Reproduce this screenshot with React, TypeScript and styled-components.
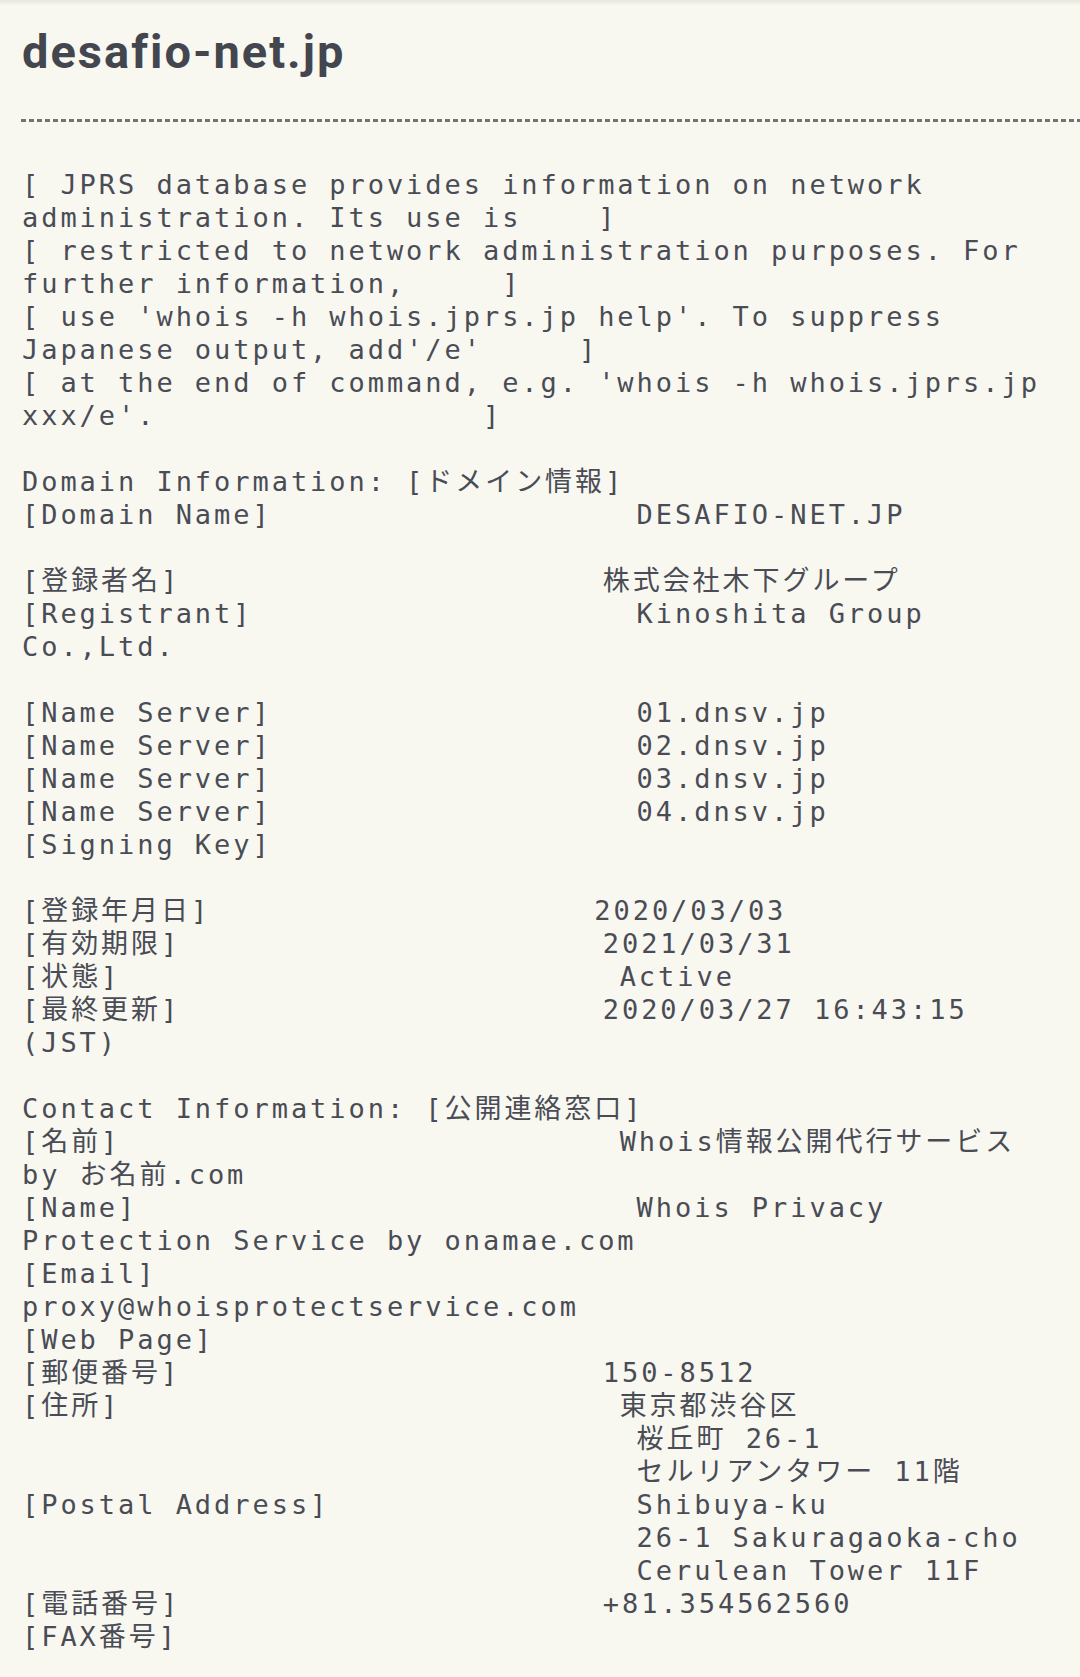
import React from "react";
import styled, { createGlobalStyle } from "styled-components";

const GlobalStyle = createGlobalStyle`
  html, body {
    margin: 0;
    padding: 0;
    background: #f8f8f1;
  }
  #root {
    min-height: 100vh;
  }
`;

const Page = styled.main`
  position: relative;
  min-height: 100vh;
  box-sizing: border-box;
  padding: 24px 21px 40px 22px;
  background: #f8f8f1;
  color: #484a53;
  overflow: hidden;

  &::before {
    content: "";
    position: absolute;
    left: 0;
    right: 0;
    top: 0;
    height: 6px;
    background: linear-gradient(to bottom, rgba(0, 0, 0, 0.07), rgba(0, 0, 0, 0));
    pointer-events: none;
  }
`;

const Title = styled.h1`
  margin: 0;
  font-family: Roboto, "Noto Sans", sans-serif;
  font-weight: 700;
  font-size: 47px;
  line-height: 56px;
  letter-spacing: 2px;
  color: #44464f;
`;

const Rule = styled.div`
  height: 3px;
  margin: 39px -21px 0 -1px;
  background: repeating-linear-gradient(
    to right,
    #737373 0px,
    #737373 5px,
    transparent 5px,
    transparent 8px
  );
`;

const WhoisText = styled.pre`
  margin: 46px 0 0;
  font-family: "DejaVu Sans Mono", "Noto Sans CJK JP", monospace;
  font-size: 27px;
  line-height: 33px;
  letter-spacing: 2.95px;
  white-space: pre-wrap;
  word-break: normal;
  overflow-wrap: normal;
  color: #4a4c55;
`;

const isWide = (c: string) => /[\u3000-\u9fff\uff00-\uffef]/.test(c);
const cols = (s: string) => Array.from(s).reduce((n, c) => n + (isWide(c) ? 2 : 1), 0);
const row = (label: string, value = "") =>
  value ? label + " ".repeat(Math.max(1, 32 - cols(label))) + value : label;
const cont = (value: string) => " ".repeat(32) + value;

const lines: string[] = [
  "[ JPRS database provides information on network administration. Its use is    ]",
  "[ restricted to network administration purposes. For further information,     ]",
  "[ use 'whois -h whois.jprs.jp help'. To suppress Japanese output, add'/e'     ]",
  "[ at the end of command, e.g. 'whois -h whois.jprs.jp xxx/e'.                 ]",
  "",
  "Domain Information: [ドメイン情報]",
  row("[Domain Name]", "DESAFIO-NET.JP"),
  "",
  row("[登録者名]", "株式会社木下グループ"),
  row("[Registrant]", "Kinoshita Group Co.,Ltd."),
  "",
  row("[Name Server]", "01.dnsv.jp"),
  row("[Name Server]", "02.dnsv.jp"),
  row("[Name Server]", "03.dnsv.jp"),
  row("[Name Server]", "04.dnsv.jp"),
  row("[Signing Key]"),
  "",
  row("[登録年月日]", "2020/03/03"),
  row("[有効期限]", "2021/03/31"),
  row("[状態]", "Active"),
  row("[最終更新]", "2020/03/27 16:43:15 (JST)"),
  "",
  "Contact Information: [公開連絡窓口]",
  row("[名前]", "Whois情報公開代行サービス by お名前.com"),
  row("[Name]", "Whois Privacy Protection Service by onamae.com"),
  row("[Email]", "proxy@whoisprotectservice.com"),
  row("[Web Page]"),
  row("[郵便番号]", "150-8512"),
  row("[住所]", "東京都渋谷区"),
  cont("桜丘町 26-1"),
  cont("セルリアンタワー 11階"),
  row("[Postal Address]", "Shibuya-ku"),
  cont("26-1 Sakuragaoka-cho"),
  cont("Cerulean Tower 11F"),
  row("[電話番号]", "+81.354562560"),
  row("[FAX番号]"),
];

export default function App() {
  return (
    <>
      <GlobalStyle />
      <Page>
        <Title>desafio-net.jp</Title>
        <Rule />
        <WhoisText>{lines.join("\n")}</WhoisText>
      </Page>
    </>
  );
}
